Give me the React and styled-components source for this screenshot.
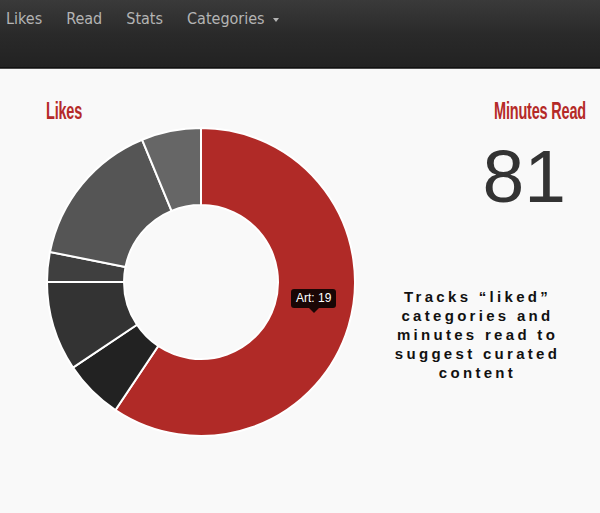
import React from 'react';
import styled, { createGlobalStyle } from 'styled-components';

const GlobalStyle = createGlobalStyle`
  html, body {
    margin: 0;
    padding: 0;
    background: #f9f9f9;
    font-family: "Liberation Sans", Arial, sans-serif;
  }
`;

const NavBar = styled.div`
  height: 68px;
  background: linear-gradient(to bottom, #3a3a3a 0%, #2a2a2a 50%, #222 100%);
  border-bottom: 1px solid #111;
  box-shadow: 0 1px 0 #4a4a4a;
  display: flex;
  align-items: flex-start;
  gap: 24px;
  padding: 8px 0 0 6px;
  box-sizing: border-box;
`;

const NavItem = styled.span`
  font-family: "DejaVu Sans", sans-serif;
  font-stretch: condensed;
  font-size: 16px;
  color: #b4b4b4;
  line-height: 22px;
`;

const Caret = styled.span`
  display: inline-block;
  margin-left: 8px;
  vertical-align: middle;
  border-top: 4px solid #b4b4b4;
  border-left: 3px solid transparent;
  border-right: 3px solid transparent;
`;

const Main = styled.div`
  display: grid;
  grid-template-columns: 400px 200px;
  padding-top: 29px;
`;

const LeftCol = styled.div`
  padding-left: 46px;
`;

const RightCol = styled.div`
  display: flex;
  flex-direction: column;
  align-items: flex-end;
`;

/* condensed headline face isn't installed, so squeeze a bold sans */
const Heading = styled.h2`
  margin: 0;
  display: inline-block;
  font-family: "Liberation Sans", Arial, sans-serif;
  font-weight: bold;
  font-size: 23px;
  line-height: 28px;
  letter-spacing: -0.3px;
  color: #b52a28;
  white-space: nowrap;
  transform: scaleX(0.63);
  transform-origin: ${(p) => (p.$alignRight ? 'right' : 'left')} center;
  margin-right: ${(p) => (p.$alignRight ? 14 : 0)}px;
`;

const ChartWrap = styled.div`
  position: relative;
  width: 310px;
  height: 310px;
  margin-top: 2px;
`;

const Tooltip = styled.div`
  position: absolute;
  left: 245px;
  top: 162px;
  background: rgba(0, 0, 0, 0.85);
  color: #fff;
  font-size: 12px;
  line-height: 19px;
  padding: 0 5px;
  border-radius: 3px;
  &::after {
    content: '';
    position: absolute;
    left: 50%;
    bottom: -5px;
    margin-left: -5px;
    border-top: 5px solid rgba(0, 0, 0, 0.85);
    border-left: 5px solid transparent;
    border-right: 5px solid transparent;
  }
`;

const BigNumber = styled.div`
  font-size: 75px;
  line-height: 80px;
  color: #333;
  margin-top: 11px;
  padding-right: 34px;
`;

const Description = styled.p`
  align-self: flex-start;
  margin: 71px 0 0 -22px;
  width: 199px;
  text-align: center;
  font-weight: bold;
  font-size: 15px;
  line-height: 19px;
  letter-spacing: 3.3px;
  color: #111;
`;

const data = [
  { label: 'Art', value: 19, color: '#b02a27' },
  { label: 'A', value: 2, color: '#222222' },
  { label: 'B', value: 3, color: '#333333' },
  { label: 'C', value: 1, color: '#3f3f3f' },
  { label: 'D', value: 5, color: '#555555' },
  { label: 'E', value: 2, color: '#666666' },
];

const Donut = () => {
  const cx = 155;
  const cy = 155;
  const ro = 154;
  const ri = 77;
  const total = data.reduce((s, d) => s + d.value, 0);
  let start = 0;
  const pt = (r, a) => [cx + r * Math.sin(a), cy - r * Math.cos(a)];
  return (
    <svg width="310" height="310" viewBox="0 0 310 310">
      {data.map((d) => {
        const a0 = start;
        const a1 = start + (d.value / total) * Math.PI * 2;
        start = a1;
        const large = a1 - a0 > Math.PI ? 1 : 0;
        const [x0, y0] = pt(ro, a0);
        const [x1, y1] = pt(ro, a1);
        const [x2, y2] = pt(ri, a1);
        const [x3, y3] = pt(ri, a0);
        const path = `M${x0},${y0} A${ro},${ro} 0 ${large} 1 ${x1},${y1} L${x2},${y2} A${ri},${ri} 0 ${large} 0 ${x3},${y3} Z`;
        return <path key={d.label} d={path} fill={d.color} stroke="#fff" strokeWidth="2" />;
      })}
    </svg>
  );
};

const App = () => {
  return (
    <>
      <GlobalStyle />
      <NavBar>
        <NavItem>Likes</NavItem>
        <NavItem>Read</NavItem>
        <NavItem>Stats</NavItem>
        <NavItem>
          Categories
          <Caret />
        </NavItem>
      </NavBar>
      <Main>
        <LeftCol>
          <Heading>Likes</Heading>
          <ChartWrap>
            <Donut />
            <Tooltip>Art: 19</Tooltip>
          </ChartWrap>
        </LeftCol>
        <RightCol>
          <Heading $alignRight>Minutes Read</Heading>
          <BigNumber>81</BigNumber>
          <Description>
            Tracks “liked” categories and minutes read to suggest curated content
          </Description>
        </RightCol>
      </Main>
    </>
  );
};

export default App;
